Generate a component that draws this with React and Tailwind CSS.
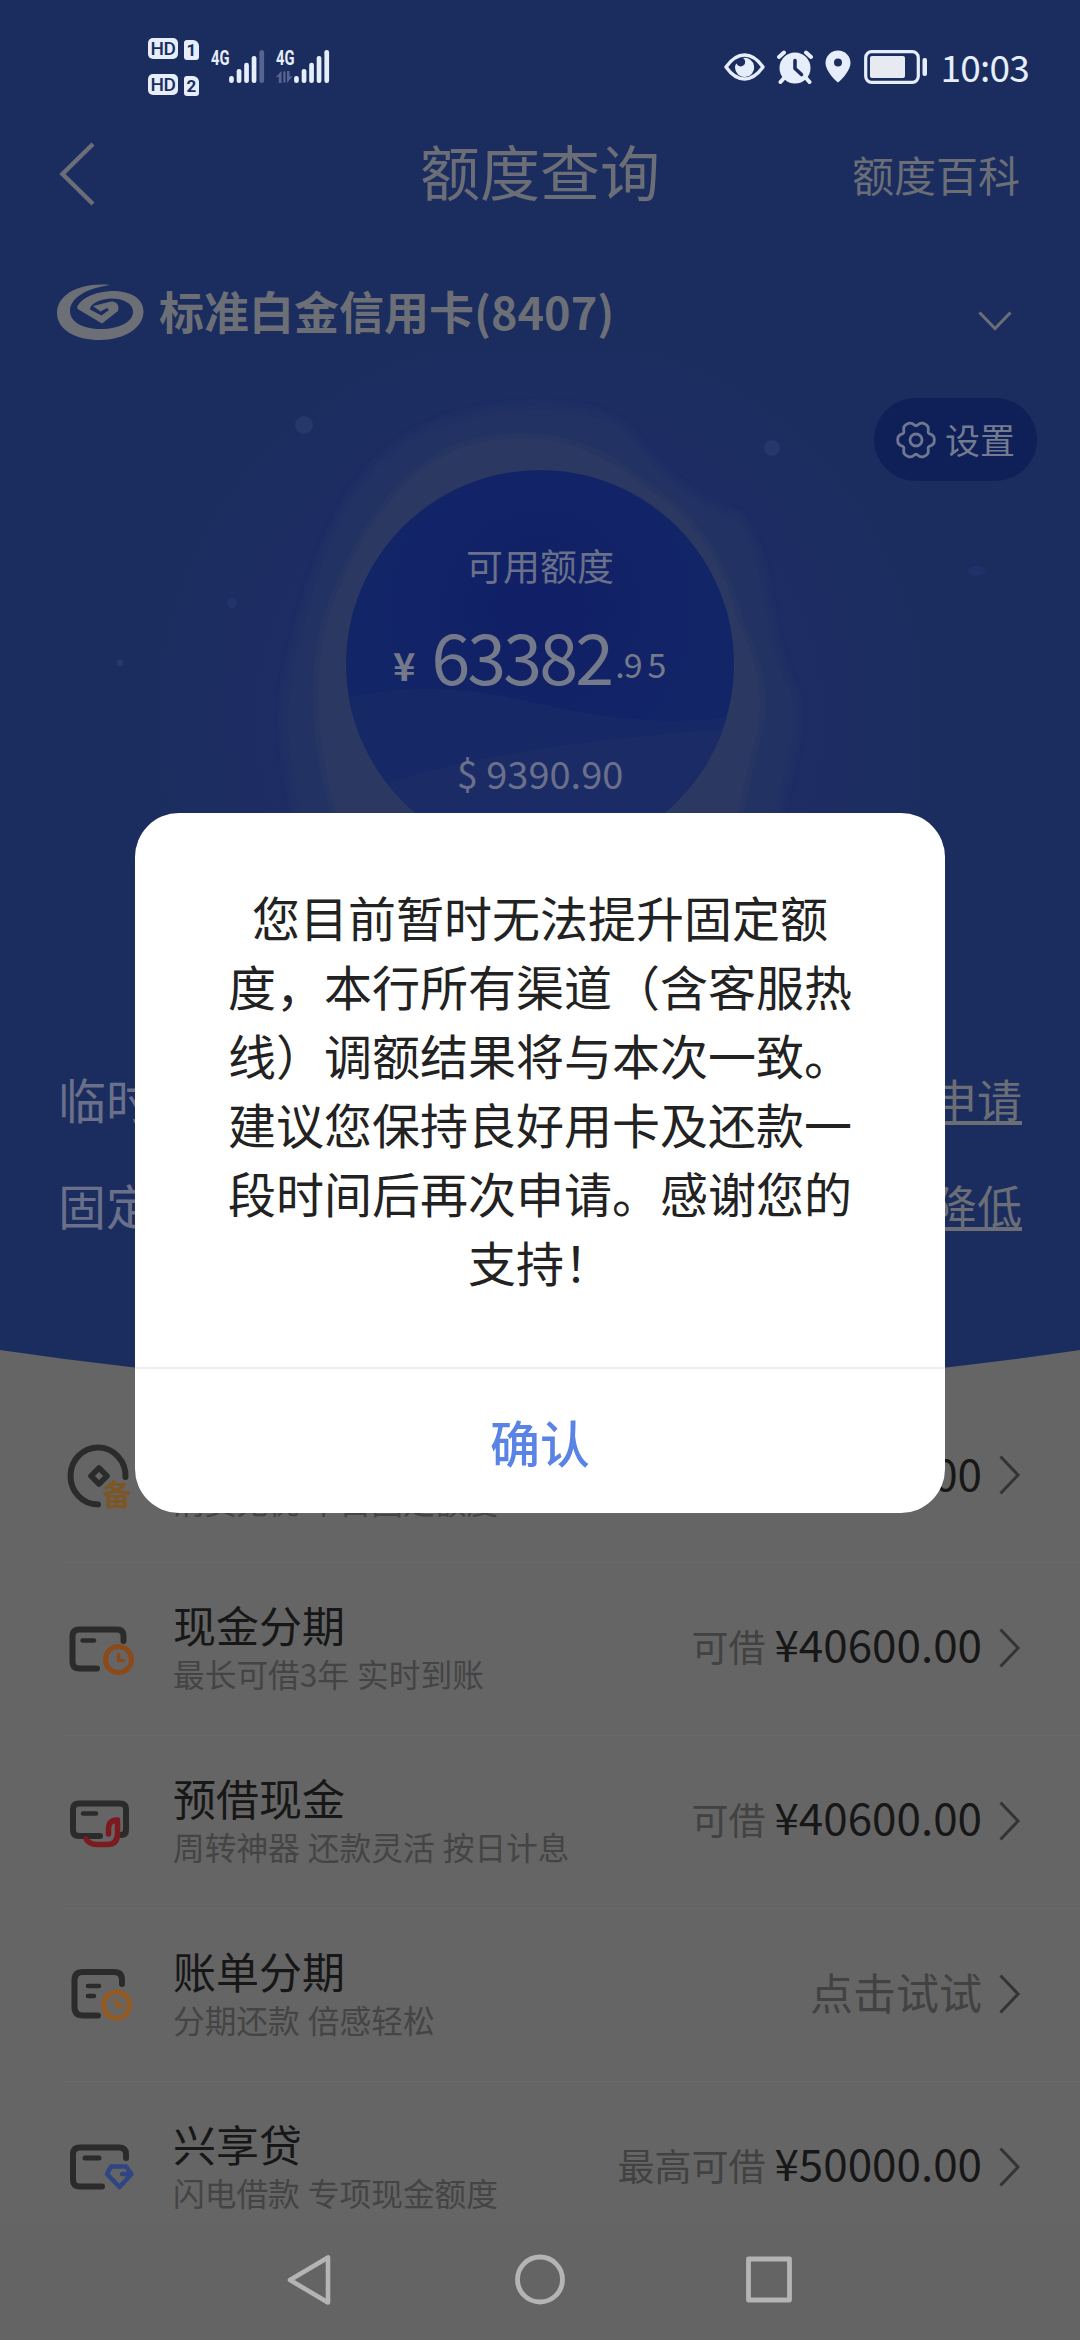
import React from "react";

const DARK = "#2b2b2b";

function HdBadge({ n }) {
  return (
    <div className="flex h-[21px] items-center gap-[6px]">
      <div className="flex h-[21px] w-[30px] items-center justify-center rounded-[5px] bg-[#e6edfb] font-['Roboto'] text-[19px] leading-[21px] font-medium tracking-[-0.5px] text-[#1b2d5f]">
        HD
      </div>
      <div className="mt-[2px] flex h-[20px] w-[15px] items-center justify-center rounded-[3px] rounded-tr-[6px] bg-[#e6edfb] font-['Roboto'] text-[17px] leading-[20px] font-bold text-[#1b2d5f]">
        {n}
      </div>
    </div>
  );
}

function Signal({ weak, arrows }) {
  const bars = [
    [20.4, 26],
    [28, 19],
    [35.5, 12.7],
    [43, 6],
    [50.7, 0],
  ];
  return (
    <svg width="53" height="34" viewBox="0 0 53 34" className="overflow-visible">
      <text x="0" y="15" fontFamily="Roboto" fontWeight="700" fontSize="21" textLength="18.5" lengthAdjust="spacingAndGlyphs" fill="#e6edfb">
        4G
      </text>
      {bars.map(([x, y], i) => (
        <rect key={x} x={x - 2.3} y={y} width="4.7" height={33 - y} rx="2.2" fill={weak && i === 4 ? "#56648f" : "#e6edfb"} />
      ))}
      {arrows && <path d="M0 27L5.500 21V33H2.800V27ZM7.300 21.500H9.500V32.500H7.300ZM11 21H13.500V26.500H16.500L11 33Z" fill="#56648f" />}
    </svg>
  );
}

function StatusBar() {
  return (
    <div className="flex h-[133px] items-center pl-[148px]">
      <div className="flex flex-col gap-[15px]">
        <HdBadge n="1" />
        <HdBadge n="2" />
      </div>
      <div className="ml-[12px] flex gap-[12px]">
        <Signal weak />
        <Signal arrows />
      </div>
      <div className="mr-[51px] ml-auto flex items-center">
        <svg width="41" height="28" viewBox="0 0 41 28">
          <path d="M2 14C8 5.500 14 2 20.500 2S33 5.500 39 14C33 22.500 27 26 20.500 26S8 22.500 2 14Z" fill="none" stroke="#e6edfb" strokeWidth="3.400" strokeLinejoin="round" />
          <path d="M19 5A9.600 9.600 0 1 1 11 14.500C11 13 11.600 11.500 12.500 10.500A4.500 4.500 0 1 0 19 5Z" fill="#e6edfb" />
        </svg>
        <svg width="36" height="34" viewBox="0 0 36 34" className="ml-[12px]">
          <circle cx="18" cy="18" r="15.500" fill="#e6edfb" />
          <path d="M2 7L7 2.500M34 7L29 2.500M7 28L3.500 32M29 28l3.500 4" stroke="#e6edfb" strokeWidth="4" strokeLinecap="round" />
          <path d="M18 10.500V18.500L24.500 24.500" fill="none" stroke="#1b2d5f" strokeWidth="3.600" strokeLinecap="round" strokeLinejoin="round" />
        </svg>
        <svg width="26" height="33" viewBox="0 0 26 33" className="ml-[12px]">
          <path fillRule="evenodd" d="M13 .5C20 .5 25.500 6 25.500 13C25.500 20 17.500 29 13 32.500C8.500 29 .5 20 .5 13C.5 6 6 .5 13 .5ZM13 8.500A4 4 0 1 0 13 16.500A4 4 0 1 0 13 8.500Z" fill="#e6edfb" />
        </svg>
        <svg width="64" height="34" viewBox="0 0 64 34" className="ml-[13px]">
          <rect x="1.700" y="1.700" width="52.600" height="30.600" rx="6" fill="none" stroke="#e6edfb" strokeWidth="3.200" />
          <rect x="6" y="6" width="35" height="22" rx="2" fill="#e8eaf2" />
          <rect x="58.500" y="8" width="4.500" height="18" rx="2" fill="#e6edfb" />
        </svg>
        <span className="mt-[-2px] ml-[13px] text-[37px] leading-[40px] tracking-[-0.8px] text-[#e6edfb]">10:03</span>
      </div>
    </div>
  );
}

function BankLogo() {
  return (
    <svg width="87" height="56" viewBox="0 0 87 56">
      <path
        d="M53 1C24 -2 0 10 0 29C0 46 19 56 43 56C67 56 86.500 44 86.500 27.500C86.500 13 71 6.500 54 7C42 7.500 26 12 20.500 22Q19.500 24 21.500 25.500L45 39.500L61 27C62.500 21 60 17.500 54 17.500L36 22L43.500 27.500L50 24L52 26L44.500 31.500L33 25.500C33 20 42 15 54 14.500C66 14.500 76 19 76 28C76 38 62 45 44 45C26 45 13 38 13 27C13 14 30 4 53 1Z"
        fill="#6c6f76"
      />
    </svg>
  );
}

function Gear() {
  let d = "";
  for (let i = 0; i <= 120; i++) {
    const a = (i / 120) * Math.PI * 2;
    const r = 16.8 + 2 * Math.cos(6 * a) - 0.5 * Math.cos(12 * a);
    d += (i ? "L" : "M") + (20 + r * Math.cos(a)).toFixed(2) + " " + (20 + r * Math.sin(a)).toFixed(2);
  }
  return (
    <svg width="40" height="40" viewBox="0 0 40 40" fill="none" stroke="#6f7791" strokeWidth="2.800" strokeLinejoin="round">
      <path d={d + "Z"} />
      <circle cx="20" cy="20" r="6" />
    </svg>
  );
}

function Glow() {
  return (
    <svg className="absolute top-[350px] left-0" width="1080" height="520" viewBox="0 350 1080 520">
      <defs>
        <radialGradient id="halo" gradientUnits="userSpaceOnUse" cx="540" cy="720" r="400">
          <stop offset="0" stopColor="#1f2e68" />
          <stop offset="0.600" stopColor="#1e2d65" />
          <stop offset="1" stopColor="#1b2d5f" />
        </radialGradient>
        <radialGradient id="disc" gradientUnits="userSpaceOnUse" cx="540" cy="610" r="200">
          <stop offset="0" stopColor="#111f66" />
          <stop offset="1" stopColor="#122667" />
        </radialGradient>
        <clipPath id="discClip">
          <circle cx="540" cy="664" r="194" />
        </clipPath>
        <filter id="soft" x="-10%" y="-10%" width="120%" height="120%">
          <feGaussianBlur stdDeviation="4" />
        </filter>
      </defs>
      <rect y="350" width="1080" height="520" fill="url(#halo)" />
      <g filter="url(#soft)">
        <path d="M390 450C440 405 580 385 630 430C655 465 690 500 740 515C775 560 765 640 795 690C810 740 775 780 780 860L310 860C280 780 275 700 295 640C315 560 340 490 390 450Z" fill="#203063" />
        <path d="M430 445C500 420 600 425 642 470C680 500 720 530 740 560C755 620 785 650 792 695C795 740 765 770 775 860L320 860C285 760 285 680 318 590C345 520 380 465 430 445Z" fill="#233362" />
        <path d="M480 440C540 428 590 440 640 480C690 510 728 560 740 620C765 670 768 710 755 750C745 790 740 820 730 860L350 860C320 790 307 700 322 630C345 550 400 455 480 440Z" fill="#293962" />
      </g>
      <g fill="#25386a">
        <circle cx="304" cy="425" r="9" />
        <circle cx="772" cy="448" r="8" />
        <circle cx="232" cy="603" r="5" fill="#20356a" />
        <circle cx="120" cy="663" r="3.500" />
        <ellipse cx="977" cy="571" rx="9" ry="5" fill="#20316a" />
      </g>
      <circle cx="540" cy="664" r="194" fill="url(#disc)" />
      <g clipPath="url(#discClip)">
        <path d="M340 700C420 680 480 690 550 706C620 722 690 725 740 715V860H340Z" fill="#162866" />
        <path d="M340 800C440 760 560 740 740 728V860H340Z" fill="#1b2b65" />
      </g>
    </svg>
  );
}

function Header() {
  return (
    <div className="relative h-[1350px] bg-[#1b2d5f]">
      <Glow />
      <div className="relative">
        <StatusBar />
        <div className="grid h-[82px] grid-cols-3 items-center text-[#6b6e76]">
          <svg width="38" height="64" viewBox="0 0 38 64" className="ml-[58px]" fill="none" stroke="#6b6e76" strokeWidth="4.500">
            <path d="M35 2L4.500 32L35 62" />
          </svg>
          <div className="pb-[8px] text-center text-[60px] leading-[70px]">额度查询</div>
          <div className="pr-[60px] text-right text-[42px] leading-[60px]">额度百科</div>
        </div>
        <div className="flex items-center pt-[69px] pr-[68px] pl-[57px]">
          <BankLogo />
          <div className="mt-[-7px] ml-[15px] h-[56px] text-[45px] leading-[60px] font-bold text-[#6c6f76]">标准白金信用卡(8407)</div>
          <svg width="34" height="20" viewBox="0 0 34 20" className="mt-[18px] ml-auto" fill="none" stroke="#6b6e76" strokeWidth="3">
            <path d="M1.500 1.500L17 17.500L32.500 1.500" />
          </svg>
        </div>
        <div className="mt-[58px] mr-[43px] ml-auto flex h-[83px] w-[163px] items-center gap-[9px] rounded-full bg-[#0e2057] pl-[22px]">
          <Gear />
          <span className="mt-[-2px] text-[35px] leading-[50px] whitespace-nowrap text-[#747b91]">设置</span>
        </div>
        <div className="mx-auto mt-[-11px] flex h-[388px] w-[388px] flex-col items-center text-[#6b708a]">
          <div className="mt-[70px] text-[37px] leading-[50px]">可用额度</div>
          <div className="mt-[20px] flex w-[388px] items-baseline pl-[47px] leading-[90px] text-[#757a8b]">
            <span className="relative bottom-[4px] text-[38px] font-bold">¥</span>
            <span className="ml-[16px] text-[70px] tracking-[-2.900px]">63382</span>
            <span className="relative bottom-[7px] ml-[4px] text-[34px] tracking-[-1px]">.</span>
            <span className="relative bottom-[7px] text-[34px] tracking-[5px]">95</span>
          </div>
          <div className="mt-[32px] text-[38px] leading-[50px]">$ 9390.90</div>
        </div>
        <div className="mt-[210px] flex h-[60px] items-center justify-between pr-[58px] pl-[58px] text-[48px] leading-[60px] text-[#6b708a]">
          <span>临时</span>
          <span className="h-[54px] border-b-4 border-[#6b6e76] text-[45px] leading-[55px] text-[#6b6e76]">申请</span>
        </div>
        <div className="mt-[46px] flex h-[60px] items-center justify-between pr-[58px] pl-[58px] text-[48px] leading-[60px] text-[#6b708a]">
          <span>固定</span>
          <span className="h-[54px] border-b-4 border-[#6b6e76] text-[45px] leading-[55px] text-[#6b6e76]">降低</span>
        </div>
      </div>
    </div>
  );
}

function Clock({ cx, cy, color }) {
  return (
    <g fill="none" stroke={color}>
      <circle cx={cx} cy={cy} r="13" strokeWidth="5" fill="#656565" />
      <path d={`M${cx} ${cy - 5}V${cy + 1}H${cx + 5}`} strokeWidth="3.500" />
    </g>
  );
}

function RowIcon({ kind }) {
  return (
    <svg width="72" height="72" viewBox="0 0 72 72" fill="none" stroke={DARK} strokeWidth="6" strokeLinecap="round" strokeLinejoin="round">
      {kind === "reserve" && (
        <>
          <path d="M61.500 36A27.500 28.500 0 1 0 34 63.500" />
          <path d="M35 27L43 35L35 43L27 35Z" strokeWidth="5.500" />
          <text x="38.500" y="64.500" fontSize="29" fontWeight="700" fill="#7c5624" stroke="none" fontFamily="Noto Sans CJK SC">
            备
          </text>
        </>
      )}
      {kind === "cash" && (
        <>
          <path d="M59.500 27V22Q59.500 15.500 53 15.500H15.500Q8.500 15.500 8.500 22V48Q8.500 54.500 15.500 54.500H33" />
          <path d="M18.500 26.500H30" strokeWidth="4.500" />
          <Clock cx={54.500} cy={45.500} color="#8c4a1b" />
        </>
      )}
      {kind === "advance" && (
        <>
          <path d="M57 48Q62 48 62 43V22Q62 16.500 56 16.500H15Q9 16.500 9 22V43Q9 49 15 49H36" />
          <path d="M19 26.500H32" strokeWidth="4.500" />
          <path d="M22 52Q25 57.500 33 57.500H43Q53.500 57.500 53.500 47V33Q44.500 33 44.500 42V47" stroke="#7c1a20" strokeWidth="5.500" />
        </>
      )}
      {kind === "bill" && (
        <>
          <path d="M58 24V20Q58 12 50 12H19Q10.500 12 10.500 20V47Q10.500 55.500 19 55.500H34" />
          <path d="M24 26H35M24 36H30" strokeWidth="4.500" />
          <Clock cx={52.500} cy={45} color="#935a22" />
        </>
      )}
      {kind === "loan" && (
        <>
          <path d="M62 25V21Q62 14.500 55 14.500H16Q9 14.500 9 21V47Q9 53.500 16 53.500H38" />
          <path d="M21 25H35" strokeWidth="5" />
          <path d="M47 33.500H62L67.500 41L55.500 54L43 41ZM66 41H58" stroke="#2f4584" strokeWidth="4.500" />
        </>
      )}
    </svg>
  );
}

const rows = [
  { kind: "reserve", title: "", sub: "消费无忧 不占固定额度", amount: "00" },
  { kind: "cash", title: "现金分期", sub: "最长可借3年 实时到账", hint: "可借", amount: "¥40600.00" },
  { kind: "advance", title: "预借现金", sub: "周转神器 还款灵活 按日计息", hint: "可借", amount: "¥40600.00" },
  { kind: "bill", title: "账单分期", sub: "分期还款 倍感轻松", action: "点击试试" },
  { kind: "loan", title: "兴享贷", sub: "闪电借款 专项现金额度", hint: "最高可借", amount: "¥50000.00" },
];

function Row({ row, first }) {
  return (
    <div className={first ? "ml-[64px] flex h-[173px] items-center" : "ml-[64px] flex h-[173px] items-center shadow-[0_-1px_0_#696969]"}>
      <RowIcon kind={row.kind} />
      <div className="mt-[-2px] ml-[37px]">
        <div className="h-[49px] text-[43px] leading-[49px] text-[#171717]">{row.title}</div>
        <div className="text-[31.700px] leading-[49px] text-[#444444] [word-spacing:1px]">{row.sub}</div>
      </div>
      <div className="ml-auto flex items-baseline gap-[9px] pb-[10px] leading-[60px]">
        {row.hint && <span className="text-[37px] text-[#424242]">{row.hint}</span>}
        {row.amount && <span className="text-[44px] text-[#171717]">{row.amount}</span>}
        {row.action && <span className="text-[43px] text-[#424242]">{row.action}</span>}
      </div>
      <svg width="22" height="40" viewBox="0 0 22 40" className="mt-[-4px] mr-[59px] ml-[17px]" fill="none" stroke="#343434" strokeWidth="3">
        <path d="M1.500 1.500L19 20L1.500 38.500" />
      </svg>
    </div>
  );
}

const message = [
  "您目前暂时无法提升固定额",
  "度，本行所有渠道（含客服热",
  "线）调额结果将与本次一致。",
  "建议您保持良好用卡及还款一",
  "段时间后再次申请。感谢您的",
  "支持！",
];

export default function App() {
  return (
    <div className="relative h-[2340px] w-[1080px] overflow-hidden bg-[#656565] font-['Noto_Sans_CJK_SC',sans-serif]">
      <Header />
      <svg width="1080" height="40" viewBox="0 0 1080 40" className="block">
        <path d="M0 0Q540 80 1080 0Z" fill="#1b2d5f" />
      </svg>
      <div className="h-[833px]">
        {rows.map((row, i) => (
          <Row key={row.kind} row={row} first={i === 0} />
        ))}
      </div>
      <div className="flex h-[117px] items-center justify-center gap-[178px] bg-[#646464] pb-[3px]">
        <svg width="52" height="52" viewBox="0 0 52 52" fill="none" stroke="#b4b4b4" strokeWidth="4.600" strokeLinejoin="round">
          <path d="M44 3.500V48.500L6 26Z" />
        </svg>
        <svg width="52" height="52" viewBox="0 0 52 52" fill="none" stroke="#b4b4b4" strokeWidth="4.800">
          <circle cx="26" cy="25.500" r="22.500" />
        </svg>
        <svg width="52" height="52" viewBox="0 0 52 52" fill="none" stroke="#b4b4b4" strokeWidth="4.800" strokeLinejoin="round">
          <rect x="4.500" y="5" width="41" height="41" />
        </svg>
      </div>

      <div className="absolute inset-0 flex items-start justify-center pt-[813px]">
        <div className="flex h-[700px] w-[810px] flex-col rounded-[44px] bg-white">
          <div className="h-[554px] pt-[69px] text-center text-[48px] leading-[69px] text-[#222222]">
            {message.map((line) => (
              <div key={line} className="whitespace-nowrap">
                {line}
              </div>
            ))}
          </div>
          <div className="flex h-[146px] items-center justify-center border-t-2 border-[#eeeeee] text-[50px] font-medium text-[#5a83e6]">
            确认
          </div>
        </div>
      </div>
    </div>
  );
}
